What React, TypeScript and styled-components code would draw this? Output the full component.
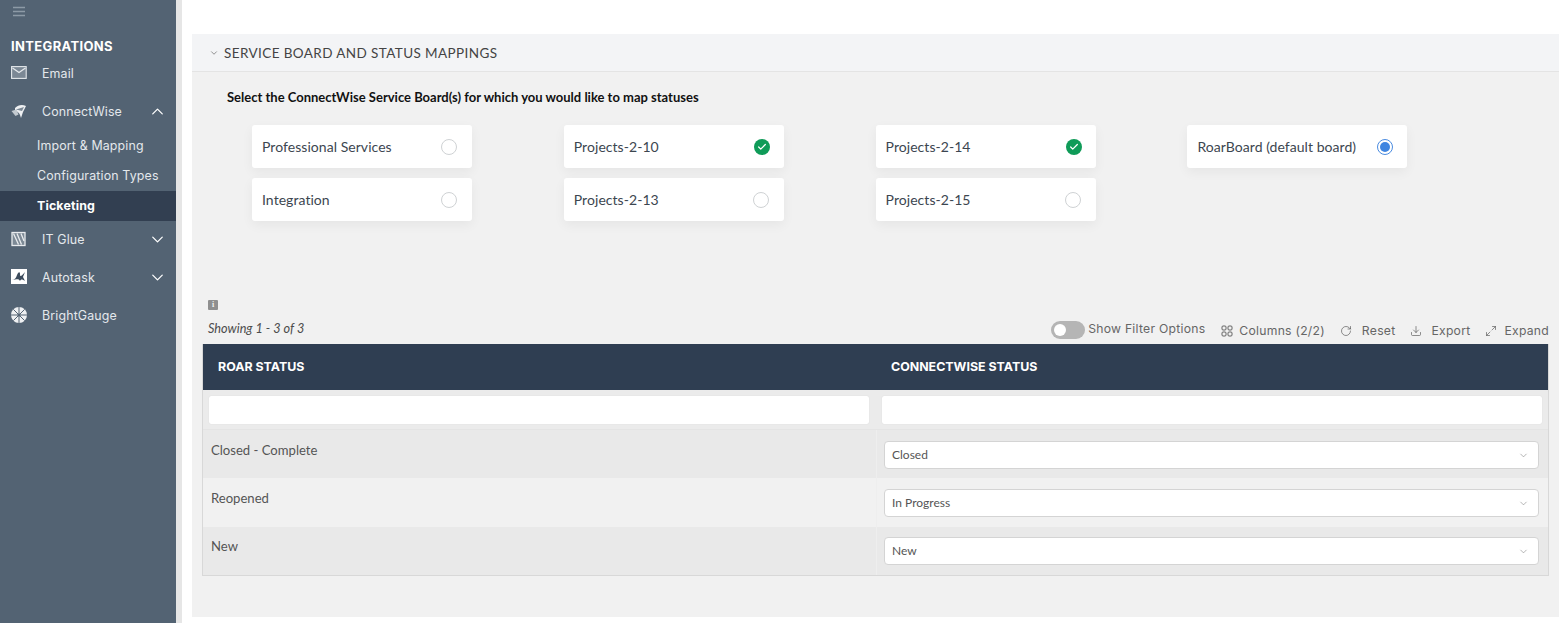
import React from 'react';
import styled, { createGlobalStyle } from 'styled-components';
import { ChevronDown, ChevronUp, RotateCw, Download, Maximize2, Check } from 'lucide-react';

const Global = createGlobalStyle`
  html, body { margin: 0; padding: 0; background: #fff; overflow: hidden; }
  * { box-sizing: border-box; }
  #root { height: 623px; }
`;
const Page = styled.div`display: flex; width: 1563px; height: 623px; background: #fff;`;
const Sidebar = styled.nav`
  width: 182px; height: 623px; flex: none; background: #536373;
  border-right: 6px solid #e6e6e6; font-family: Inter, "Open Sans", sans-serif; color: #e4e8ec;
`;
const Burger = styled.div`height: 38px; padding: 6px 0 0 13px; color: #8d9aa6; svg { display: block; }`;
const SectionTitle = styled.div`
  padding-left: 11px; font-size: 13px; font-weight: 700; color: #fff; height: 16px; line-height: 16px; letter-spacing: .35px;
`;
const NavItem = styled.div<{ $mt?: number }>`
  display: flex; align-items: center; height: 20px; margin-top: ${p => p.$mt ?? 18}px; padding: 0 11px; font-size: 12.4px; letter-spacing: .15px;
`;
const NavIcon = styled.svg`width: 16px; height: 16px; flex: none; margin-right: 15px;`;
const NavLabel = styled.span`flex: 1;`;
const SubItem = styled.div<{ $active?: boolean }>`
  height: 30px; line-height: 30px; padding-left: 37px; font-size: 12.4px; letter-spacing: .15px;
  background: ${p => p.$active ? '#323f51' : 'transparent'};
  font-weight: ${p => p.$active ? 700 : 400};
  color: ${p => p.$active ? '#fff' : '#e4e8ec'};
`;
const SubList = styled.div`margin-top: 10px;`;
const Main = styled.main`flex: 1; padding: 34px 4px 6px 10px; min-width: 0;`;
const Panel = styled.section`height: 583px; background: #f1f1f1; font-family: Lato, "Open Sans", sans-serif;`;
const PanelHead = styled.header`
  height: 38px; display: flex; align-items: center; gap: 5px; padding-left: 17px; background: #f3f4f6;
  border-bottom: 1px solid #e4e4e4; color: #444; font-size: 13.5px; letter-spacing: .4px;
`;
const Prompt = styled.h2`margin: 18px 0 0 35px; height: 15px; line-height: 15px; font-size: 13px; font-weight: 700; color: #111; letter-spacing: 0;`;
const Boards = styled.div`
  display: grid; grid-template-columns: repeat(4, 220px); grid-auto-rows: 43px; column-gap: 91.8px; row-gap: 10px;
  margin: 20px 0 0 60px; height: 96px;
`;
const BoardCard = styled.div<{ $col: number; $row: number }>`
  grid-column: ${p => p.$col}; grid-row: ${p => p.$row};
  display: flex; align-items: center; justify-content: space-between; padding: 0 14px 0 10px;
  background: #fff; border-radius: 3px; box-shadow: 0 4px 12px rgba(0,0,0,.05);
  font-size: 14px; color: #3c4650; letter-spacing: .05px;
`;
const RadioEmpty = styled.span`width: 16px; height: 16px; border-radius: 50%; border: 1px solid #cfd2d4; background: #fff; margin-right: 1px;`;
const RadioOn = styled.span`
  width: 16px; height: 16px; border-radius: 50%; border: 1.5px solid #4a8be0; background: #fff; display: flex; align-items: center; justify-content: center;
  margin-right: 0;
  &::after { content: ''; width: 10px; height: 10px; border-radius: 50%; background: #3f85e0; }
`;
const CheckOn = styled.span`
  width: 16px; height: 16px; border-radius: 50%; background: #0f9b58; color: #fff; display: flex; align-items: center; justify-content: center;
`;
const GridArea = styled.div`margin: 0 10px;`;
const InfoIcon = styled.div`
  width: 10px; height: 10px; margin: 79px 0 0 6px; background: #8f8f8f; border-radius: 1px; color: #f1f1f1;
  font: 700 8px/10px "Liberation Serif", serif; text-align: center;
`;
const ToolRow = styled.div`display: flex; align-items: center; height: 29px; margin-top: 4px;`;
const Showing = styled.span`font-style: italic; font-size: 12.7px; color: #4c4c4c; margin: 0 auto 0 6px; position: relative; top: -1px;`;
const Toggle = styled.span`
  width: 34px; height: 18px; border-radius: 9px; background: #b5b5b5; display: flex; align-items: center; padding-left: 3px; margin-right: 3px;
  position: relative; top: 1px;
  &::after { content: ''; width: 12px; height: 12px; background: #fff; border-radius: 50%; }
`;
const ToolLabel = styled.span<{ $gap?: number; $raised?: boolean }>`
  font-family: Inter, "Open Sans", sans-serif; font-size: 12.2px; color: #666; letter-spacing: .25px; margin-left: ${p => p.$gap ?? 8}px;
  position: relative; top: ${p => p.$raised ? 0 : 2}px;
`;
const ToolIcon = styled.span<{ $ml: number }>`display: inline-flex; margin-left: ${p => p.$ml}px; color: #555; position: relative; top: 2px;`;
const Table = styled.div`
  margin-top: 1px; border: 1px solid #d8d8d8; border-top: 0;
  display: grid; grid-template-columns: 673px 1fr;
`;
const HeadCell = styled.div`
  height: 46px; background: #2f3e52; color: #fff; font: 700 12.4px/46px Inter, "Open Sans", sans-serif; padding-left: 15px; text-transform: uppercase;
`;
const FilterCell = styled.div`height: 40px; background: #ebebeb; padding: 6px; border-bottom: 1px solid #e4e4e4;
  &:nth-child(3) { padding-right: 7px; }
`;
const FilterInput = styled.div`height: 28px; background: #fff; border-radius: 2px; box-shadow: 0 0 1px rgba(0,0,0,.15);`;
const Cell = styled.div<{ $alt: boolean; $h: number; $top: number }>`
  height: ${p => p.$h}px; background: ${p => p.$alt ? '#e9e9e9' : '#f1f1f1'}; padding: ${p => p.$top}px 8px 0; font-size: 13.1px; line-height: 18px; color: #555;
`;
const SelectCell = styled(Cell)`padding: ${p => p.$top}px 9px 0 7px; border-left: 1px solid #eeeeee;`;
const Select = styled.div`
  height: 28px; display: flex; align-items: center; justify-content: space-between; padding: 0 9px 0 7px; background: #fff;
  border: 1px solid #d4d4d4; border-radius: 4px; font-size: 12px; color: #555;
`;

const boards = [
  { name: 'Professional Services', c: 1, r: 1, s: 'none' },
  { name: 'Integration', c: 1, r: 2, s: 'none' },
  { name: 'Projects-2-10', c: 2, r: 1, s: 'check' },
  { name: 'Projects-2-13', c: 2, r: 2, s: 'none' },
  { name: 'Projects-2-14', c: 3, r: 1, s: 'check' },
  { name: 'Projects-2-15', c: 3, r: 2, s: 'none' },
  { name: 'RoarBoard (default board)', c: 4, r: 1, s: 'radio' },
];
const rows = [
  { a: 'Closed - Complete', b: 'Closed', h: 48, top: 11, alt: true },
  { a: 'Reopened', b: 'In Progress', h: 49, top: 11, alt: false },
  { a: 'New', b: 'New', h: 48, top: 10, alt: true },
];

export default function App() {
  return (
    <Page>
      <Global />
      <Sidebar>
        <Burger>
          <svg width="12" height="11" viewBox="0 0 12 11" fill="none" stroke="currentColor" strokeWidth="1.4"><path d="M0 1.5h12M0 5.5h12M0 9.5h12" /></svg>
        </Burger>
        <SectionTitle>INTEGRATIONS</SectionTitle>
        <NavItem $mt={9}>
          <NavIcon viewBox="0 0 16 16" fill="none" stroke="#e4e8ec" strokeWidth="1.1"><rect x=".6" y="1.6" width="14.6" height="11.8" fill="#7b8895" /><path d="M1.5 3l6.5 4.5L14.500 3" strokeWidth="1.3" /></NavIcon>
          <NavLabel>Email</NavLabel>
        </NavItem>
        <NavItem>
          <NavIcon viewBox="0 0 16 16" fill="#eef0f2"><path d="M4 5c3-3 7-4 11-2l-3 6-2 6-1-3c-.6-2-3-4-5-4.500z" /><path d="M.5 8l5-1.500 2 5-3 1.500z" fill="#c3cad0" /><path d="M5 6.500l8-2.500-2 4z" fill="#7b8895" /></NavIcon>
          <NavLabel>ConnectWise</NavLabel>
          <ChevronUp size={19} strokeWidth={1.6} color="#fff" style={{ marginRight: -2 }} />
        </NavItem>
        <SubList>
          <SubItem>Import &amp; Mapping</SubItem>
          <SubItem>Configuration Types</SubItem>
          <SubItem $active>Ticketing</SubItem>
        </SubList>
        <NavItem $mt={8}>
          <NavIcon viewBox="0 0 16 16" fill="none"><rect x="1" y="1.500" width="13" height="13" fill="#7d8a96" stroke="#e8ebee" strokeWidth="1.300" /><path d="M2.500 2.500l5 11M6 2.500l4.500 11M10 2.500l3 7.500" stroke="#e8ebee" strokeWidth="1.300" /></NavIcon>
          <NavLabel>IT Glue</NavLabel>
          <ChevronDown size={19} strokeWidth={1.6} color="#fff" style={{ marginRight: -2 }} />
        </NavItem>
        <NavItem>
          <NavIcon viewBox="0 0 16 16"><rect width="16" height="15" fill="#fff" /><path d="M1 11c3-.5 4-2 5-5 1-3 3-4 3-1s1 3 5-2l-2 5 2 4c-3-2-4-2-5 0-1-2-2-2-8-1z" fill="#3c4b5c" /></NavIcon>
          <NavLabel>Autotask</NavLabel>
          <ChevronDown size={19} strokeWidth={1.6} color="#fff" style={{ marginRight: -2 }} />
        </NavItem>
        <NavItem>
          <NavIcon viewBox="0 0 16 16"><circle cx="8" cy="8" r="8" fill="#eef0f2" /><path d="M8 0v16M0 8h16M2.300 2.300l11.400 11.400M13.700 2.300L2.300 13.700" stroke="#536373" strokeWidth="1" /><circle cx="8" cy="8" r="1.500" fill="#536373" /></NavIcon>
          <NavLabel>BrightGauge</NavLabel>
        </NavItem>
      </Sidebar>
      <Main>
        <Panel>
          <PanelHead>
            <ChevronDown size={10} strokeWidth={1.5} color="#555" />
            SERVICE BOARD AND STATUS MAPPINGS
          </PanelHead>
          <Prompt>Select the ConnectWise Service Board(s) for which you would like to map statuses</Prompt>
          <Boards>
            {boards.map(b => (
              <BoardCard key={b.name} $col={b.c} $row={b.r}>
                {b.name}
                {b.s === 'none' && <RadioEmpty />}
                {b.s === 'radio' && <RadioOn />}
                {b.s === 'check' && <CheckOn><Check size={10} strokeWidth={3} /></CheckOn>}
              </BoardCard>
            ))}
          </Boards>
          <GridArea>
            <InfoIcon>i</InfoIcon>
            <ToolRow>
              <Showing>Showing 1 - 3 of 3</Showing>
              <Toggle />
              <ToolLabel $gap={0} $raised>Show Filter Options</ToolLabel>
              <ToolIcon $ml={16}>
                <svg width="12" height="12" viewBox="0 0 12 12" fill="none" stroke="currentColor" strokeWidth=".9"><rect x="1" y="1" width="4" height="4" rx="1" /><rect x="7" y="1" width="4" height="4" rx="1" /><rect x="1" y="7" width="4" height="4" rx="1" /><rect x="7" y="7" width="4" height="4" rx="1" /></svg>
              </ToolIcon>
              <ToolLabel $gap={6}>Columns (2/2)</ToolLabel>
              <ToolIcon $ml={15}><RotateCw size={12} strokeWidth={1.3} /></ToolIcon>
              <ToolLabel $gap={10}>Reset</ToolLabel>
              <ToolIcon $ml={15}><Download size={12} strokeWidth={1.3} /></ToolIcon>
              <ToolLabel $gap={9}>Export</ToolLabel>
              <ToolIcon $ml={15}><Maximize2 size={12} strokeWidth={1.3} /></ToolIcon>
              <ToolLabel $gap={7}>Expand</ToolLabel>
            </ToolRow>
            <Table>
              <HeadCell>Roar Status</HeadCell>
              <HeadCell>ConnectWise Status</HeadCell>
              <FilterCell><FilterInput /></FilterCell>
              <FilterCell><FilterInput /></FilterCell>
              {rows.map(r => (
                <React.Fragment key={r.a}>
                  <Cell $alt={r.alt} $h={r.h} $top={r.top}>{r.a}</Cell>
                  <SelectCell $alt={r.alt} $h={r.h} $top={r.top}>
                    <Select>{r.b}<ChevronDown size={11} strokeWidth={1.2} color="#777" /></Select>
                  </SelectCell>
                </React.Fragment>
              ))}
            </Table>
          </GridArea>
        </Panel>
      </Main>
    </Page>
  );
}
